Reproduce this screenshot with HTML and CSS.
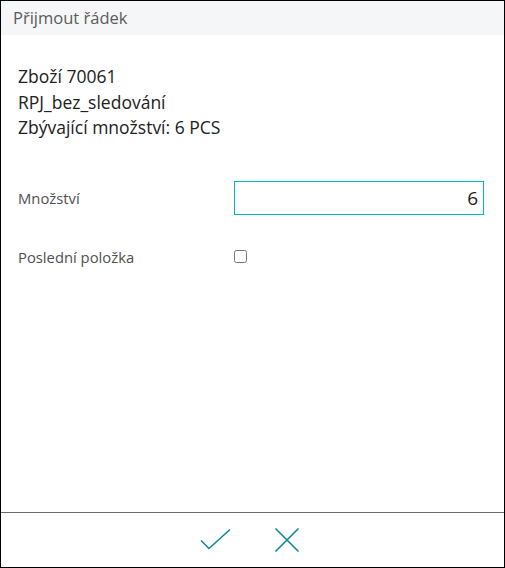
FILE: index.html
```html
<!DOCTYPE html>
<html lang="cs">
<head>
    <meta charset="UTF-8">
    <title>Přijmout řádek</title>
    <link rel="stylesheet" href="styles.css">
</head>
<body>
    <div class="dialog">
        <div class="dialog-header">Přijmout řádek</div>

        <div class="dialog-body">
            <div class="info">
                <div>Zboží 70061</div>
                <div>RPJ_bez_sledování</div>
                <div>Zbývající množství: 6 PCS</div>
            </div>

            <div class="field">
                <label for="mnozstvi">Množství</label>
                <input type="text" id="mnozstvi" value="6">
            </div>

            <div class="field">
                <label for="posledni">Poslední položka</label>
                <input type="checkbox" id="posledni">
            </div>
        </div>

        <div class="dialog-footer">
            <button class="action" title="OK">
                <svg width="32" height="24" viewBox="0 0 32 24">
                    <path d="M1 12.5 L9 20.5 L30 1.5" fill="none" stroke="#0b8a96" stroke-width="1.6"/>
                </svg>
            </button>
            <button class="action" title="Zrušit">
                <svg width="26" height="26" viewBox="0 0 26 26">
                    <path d="M1.5 1.5 L24.5 24.5 M24.5 1.5 L1.5 24.5" fill="none" stroke="#0b8a96" stroke-width="1.6"/>
                </svg>
            </button>
        </div>
    </div>
</body>
</html>
```

FILE: styles.css
```css
body {
    margin: 0;
    font-family: "Open Sans", "Noto Sans", sans-serif;
    background-color: #fff;
}

.dialog {
    width: 505px;
    height: 568px;
    box-sizing: border-box;
    border: 1px solid #000;
    display: flex;
    flex-direction: column;
}

.dialog-header {
    height: 34px;
    line-height: 34px;
    padding-left: 12px;
    background-color: #f4f6f8;
    color: #5b5b5b;
    font-size: 16.5px;
}

.dialog-body {
    flex: 1;
    padding: 29px 17px 0 17px;
}

.info {
    color: #212121;
    font-size: 17.5px;
    line-height: 25.5px;
    margin-bottom: 40px;
}

.field {
    display: flex;
    align-items: center;
    margin-bottom: 32px;
}

.field label {
    width: 216px;
    color: #505050;
    font-size: 14.8px;
}

.field input[type="text"] {
    width: 250px;
    height: 34px;
    box-sizing: border-box;
    border: 1px solid #00b7c3;
    padding: 0 5px;
    text-align: right;
    font-family: inherit;
    font-size: 19px;
    color: #212121;
    outline: none;
}

.field input[type="checkbox"] {
    margin: 0;
    width: 13px;
    height: 13px;
}

.dialog-footer {
    height: 54px;
    border-top: 1px solid #6b6b6b;
    display: flex;
    justify-content: center;
    align-items: center;
    gap: 42px;
    padding-right: 6px;
}

.action {
    background: none;
    border: none;
    padding: 0;
    cursor: pointer;
    display: flex;
}
```
